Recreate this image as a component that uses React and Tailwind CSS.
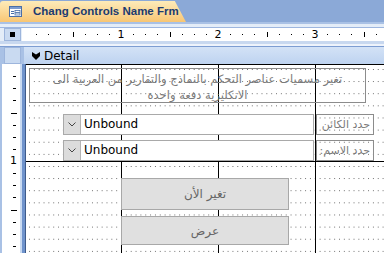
import React from 'react';

const INCH = 97;
const STEP = INCH / 8;

// ticks on the white strip, which starts at x=22 of the page
function HRuler() {
  const ticks = [];
  for (let k = 1; k <= 29; k++) {
    const x = 2 + k * STEP;
    if (k % 8 === 0) {
      ticks.push(
        <span key={k} className="absolute top-0 text-[11px] leading-[13px] text-black -translate-x-1/2" style={{ left: x }}>
          {k / 8}
        </span>
      );
    } else if (k % 4 === 0) {
      ticks.push(<span key={k} className="absolute top-[4px] w-px h-[5px] bg-black" style={{ left: Math.round(x) }} />);
    } else {
      ticks.push(<span key={k} className="absolute top-[6px] w-px h-px bg-black" style={{ left: Math.round(x) }} />);
    }
  }
  return ticks;
}

function VRuler() {
  const ticks = [];
  for (let k = 1; k <= 15; k++) {
    const y = k * STEP;
    if (k % 8 === 0) {
      ticks.push(
        <span key={k} className="absolute left-[8px] text-[11px] leading-[12px] text-black -translate-y-1/2" style={{ top: y }}>
          {k / 8}
        </span>
      );
    } else if (k % 4 === 0) {
      ticks.push(<span key={k} className="absolute left-[9px] w-[6px] h-px bg-black" style={{ top: Math.round(y) }} />);
    } else {
      ticks.push(<span key={k} className="absolute left-[11px] w-[3px] h-px bg-black" style={{ top: Math.round(y) }} />);
    }
  }
  return ticks;
}

function FormIcon() {
  return (
    <svg width="13" height="11" viewBox="0 0 13 11">
      <rect x="0.5" y="0.5" width="12" height="10" fill="#fff" stroke="#4a6fa8" />
      <rect x="1" y="1" width="11" height="2" fill="#7c9ccf" />
      <rect x="2" y="5" width="3" height="1" fill="#4a6fa8" />
      <rect x="2" y="7" width="3" height="1" fill="#4a6fa8" />
      <rect x="6" y="4.5" width="5" height="2" fill="none" stroke="#4a6fa8" strokeWidth="0.8" />
      <rect x="6" y="7" width="5" height="2" fill="none" stroke="#4a6fa8" strokeWidth="0.8" />
    </svg>
  );
}

function SectionArrow() {
  return (
    <svg width="10" height="10" viewBox="0 0 10 10">
      <path d="M1 1 L5 3.5 L9 1 L9 5 L5 9 L1 5 Z" fill="#000" />
    </svg>
  );
}

function Combo({ top }) {
  return (
    <div className="absolute left-[37px] w-[251px] h-[21px] bg-white border border-[#a9a9a9] flex items-stretch" style={{ top }}>
      <div className="w-[17px] bg-[#dcdcdc] border-r border-[#b5b5b5] flex items-center justify-center">
        <svg width="8" height="5" viewBox="0 0 8 5">
          <path d="M0.5 0.5 L4 4 L7.5 0.5" fill="none" stroke="#444" strokeWidth="1" />
        </svg>
      </div>
      <span className="pl-[3px] text-[12px] leading-[19px] text-black">Unbound</span>
    </div>
  );
}

function FieldLabel({ top, children }) {
  return (
    <div
      dir="rtl"
      className="absolute left-[290px] w-[58px] h-[21px] border border-[#8c8c8c] pr-[3px] whitespace-nowrap overflow-hidden text-[11px] leading-[19px] text-[#7a7a7a]"
      style={{ top }}
    >
      {children}
    </div>
  );
}

export default function App() {
  return (
    <div className="w-[384px] h-[253px] overflow-hidden bg-[#8ba9d7] flex flex-col font-['DejaVu_Sans',sans-serif]">
      {/* Tab strip */}
      <div className="h-[22px] flex items-end">
        <div className="h-[21px] w-[186px] bg-gradient-to-b from-[#fdebb9] to-[#f8c673] rounded-tl-[3px] [clip-path:polygon(0_0,94%_0,100%_100%,0_100%)] flex items-center pl-[9px] gap-[11px]">
          <FormIcon />
          <span className="whitespace-nowrap text-[11.5px] font-bold text-[#1c3b70] font-['Liberation_Sans',sans-serif]">Chang Controls Name Frm</span>
        </div>
      </div>
      <div className="h-[2px] bg-[#a9c1e5]" />
      <div className="h-[3px] bg-[#e4edf8]" />
      <div className="h-px bg-[#9db6df]" />

      {/* Ruler row */}
      <div className="h-[13px] flex bg-[#e4edf8]">
        <div className="w-[22px] pl-[4px] pr-px">
          <div className="h-full bg-[#c9daf1] border border-[#9db5dc] flex items-center justify-center">
            <div className="w-[5px] h-[5px] bg-black" />
          </div>
        </div>
        <div className="flex-1 relative bg-white">
          <HRuler />
        </div>
      </div>
      <div className="h-[3px] bg-[#c8d8ef]" />
      <div className="h-[2px] bg-[#eef3fb]" />
      <div className="h-px bg-[#7d9dd2]" />

      {/* Section header */}
      <div className="h-[17px] flex bg-[#a9c1e5]">
        <div className="w-[4px]" />
        <div className="w-[17px] bg-[#c9daf1] border border-[#9db5dc]" />
        <div className="w-[3px]" />
        <div className="flex-1 bg-gradient-to-b from-[#d3e2f6] to-[#bed3f0] flex items-center pl-[7px] gap-[3px]">
          <SectionArrow />
          <span className="text-[12px] text-black">Detail</span>
        </div>
      </div>

      {/* Detail area */}
      <div className="flex-1 flex bg-[#a9c1e5]">
        <div className="w-[2px]" />
        <div className="w-[18px] bg-white relative">
          <VRuler />
        </div>
        <div className="w-[2px] bg-[#c9daf1]" />
        <div className="w-[3px] bg-[#6f93cc]" />
        <div className="w-px bg-[#3d5a8a]" />
        <div className="flex-1 relative bg-white border-t border-black bg-[radial-gradient(circle_at_0.5px_0.5px,#666_0.6px,transparent_0.9px)] bg-[length:4.85px_12.125px] bg-[position:3px_4px]">
          {/* inch grid lines */}
          <div className="absolute left-[95px] top-0 bottom-0 w-px bg-black" />
          <div className="absolute left-[192px] top-0 bottom-0 w-px bg-black" />
          <div className="absolute left-[289px] top-0 bottom-0 w-px bg-black" />
          <div className="absolute left-0 right-0 top-[96px] h-px bg-black" />

          {/* title label */}
          <div
            dir="rtl"
            className="absolute left-[3px] top-[3px] w-[337px] h-[35px] border border-[#8c8c8c] text-center text-[11.5px] leading-[16px] pt-[2px] text-[#7a7a7a]"
          >
            <div className="whitespace-nowrap">تغير مسميات عناصر التحكم بالنماذج والتقارير من العربية الى</div>
            <div className="whitespace-nowrap">الانكليزية دفعة واحدة</div>
          </div>

          <Combo top={49} />
          <FieldLabel top={49}>حدد الكائن</FieldLabel>

          <Combo top={75} />
          <FieldLabel top={75}>حدد الاسم:</FieldLabel>

          {/* buttons */}
          <div className="absolute left-[95px] top-[113px] w-[168px] h-[32px] bg-[#e0e0e0] border border-[#a8a8a8] flex items-center justify-center text-[12px] text-[#666]">
            تغير الأن
          </div>
          <div className="absolute left-[95px] top-[151px] w-[168px] h-[29px] bg-[#e0e0e0] border border-[#a8a8a8] flex items-center justify-center text-[12px] text-[#666]">
            عرض
          </div>
        </div>
      </div>
    </div>
  );
}
